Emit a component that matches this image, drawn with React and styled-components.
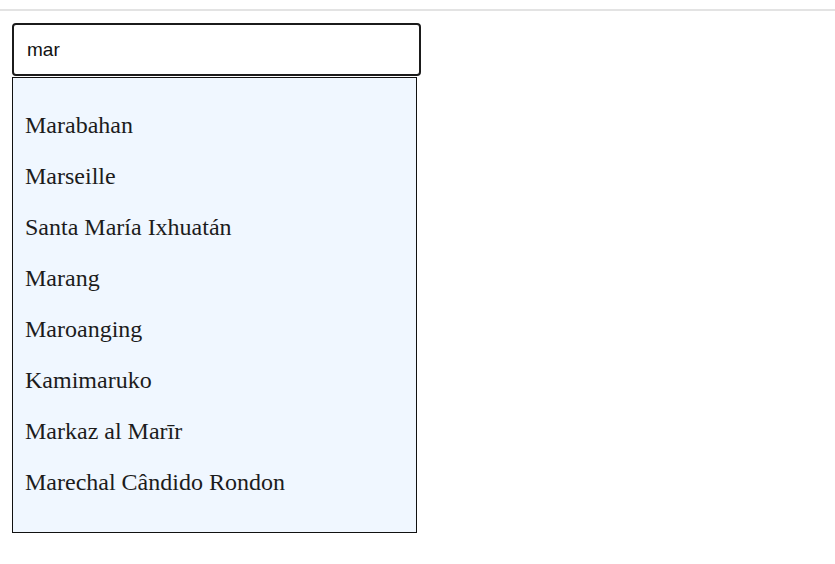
import React from "react";
import styled, { createGlobalStyle } from "styled-components";

const Global = createGlobalStyle`
  html, body { margin: 0; padding: 0; background: #ffffff; }
  * { box-sizing: border-box; }
`;

const TopBar = styled.div`
  height: 11px;
  border-bottom: 2px solid #e3e3e3;
`;

const Wrapper = styled.div`
  padding: 12px 12px 0 12px;
  display: flex;
  flex-direction: column;
  align-items: flex-start;
`;

const SearchInput = styled.input`
  width: 409px;
  height: 53px;
  border: 2px solid #1b1b1b;
  border-radius: 4px;
  padding: 0 14px 0 13px;
  font-family: "Liberation Sans", Arial, sans-serif;
  font-size: 19px;
  color: #111;
  outline: none;
  background: #fff;
  caret-color: #000;
`;

const Suggestions = styled.ul`
  list-style: none;
  margin: 1px 0 0 0;
  width: 405px;
  padding: 22px 0 24px 0;
  border: 1px solid #111;
  background: #f0f7ff;
`;

const Suggestion = styled.li`
  padding: 12px 12px;
  font-family: "Liberation Serif", "Times New Roman", serif;
  font-size: 24px;
  line-height: 27px;
  color: #1c1c1c;
`;

const cities = [
  "Marabahan",
  "Marseille",
  "Santa María Ixhuatán",
  "Marang",
  "Maroanging",
  "Kamimaruko",
  "Markaz al Marīr",
  "Marechal Cândido Rondon",
];

export default function App() {
  return (
    <>
      <Global />
      <TopBar />
      <Wrapper>
        <SearchInput defaultValue="mar" autoFocus />
        <Suggestions>
          {cities.map((c) => (
            <Suggestion key={c}>{c}</Suggestion>
          ))}
        </Suggestions>
      </Wrapper>
    </>
  );
}
